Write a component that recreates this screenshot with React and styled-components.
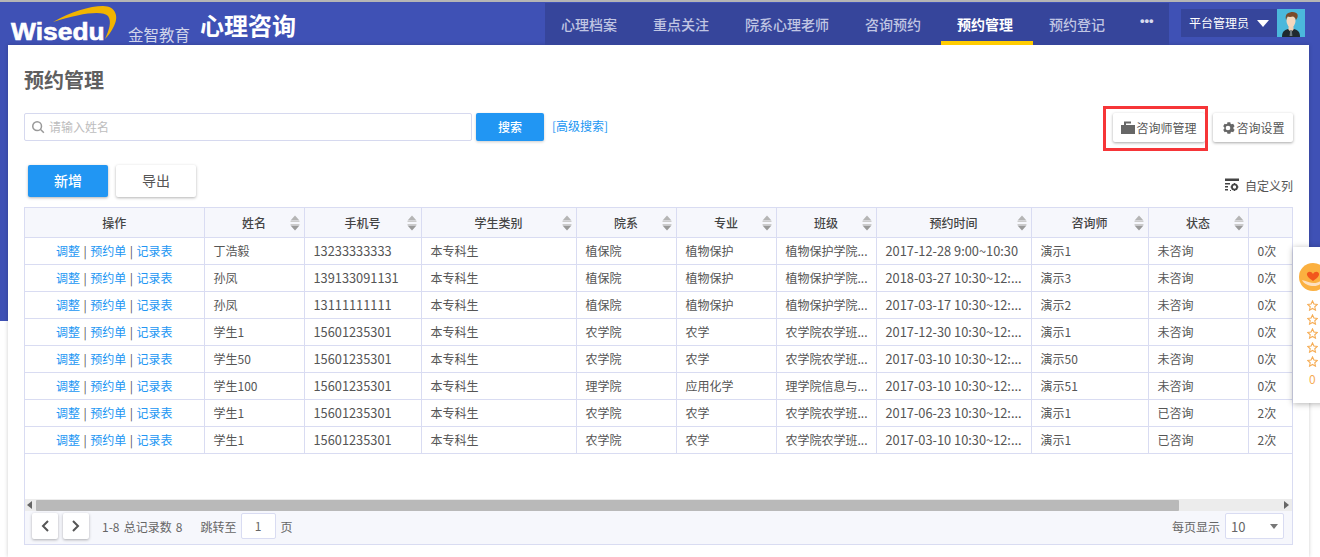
import React from 'react';
import styled, { createGlobalStyle } from 'styled-components';

const Global = createGlobalStyle`
  html, body { margin: 0; padding: 0; height: 557px; overflow: hidden; background: #fff; }
  * { box-sizing: border-box; }
  body { font-family: "Noto Sans CJK SC", "Liberation Sans", sans-serif; color: #555; }
`;

const Page = styled.div`
  position: relative;
  width: 1320px;
  height: 557px;
  overflow: hidden;
  border-top: 2px solid #b5b5b5;
  background: linear-gradient(#3f51b5 319px, #fff 319px);
`;
const Header = styled.header`
  height: 43px;
  display: flex;
  align-items: stretch;
`;
const Brand = styled.div`
  width: 545px;
  display: flex;
  align-items: flex-end;
  padding-left: 11px;
  color: #fff;
`;
const LogoBox = styled.div`
  position: relative;
  width: 117px;
  height: 43px;
  flex: none;
`;
const LogoWord = styled.span`
  position: absolute;
  left: 0;
  bottom: 0;
  font: 700 24px/26px "Liberation Sans", sans-serif;
  -webkit-text-stroke: 0.6px #fff;
  transform: scaleX(1.1);
  transform-origin: left;
`;
const Swoosh = styled.svg`
  position: absolute;
  left: 40px;
  top: 1px;
`;
const LogoCn = styled.span`
  font-size: 15.5px;
  line-height: 20px;
  margin-bottom: 1px;
  color: #d0d4ea;
  width: 73px;
  flex: none;
`;
const AppTitle = styled.span`
  font-size: 24px;
  font-weight: 700;
  line-height: 34px;
  align-self: flex-start;
  margin: 6px 0 0 -1px;
`;
const Nav = styled.nav`
  width: 624px;
  margin-top: 1px;
  display: flex;
  background: #36459b;
`;
const NavItem = styled.div`
  width: ${p => p.$w}px;
  padding-left: 16px;
  font-size: 14px;
  line-height: 42px;
  font-weight: ${p => (p.$active ? 700 : 500)};
  color: ${p => (p.$active ? '#fff' : '#c0c5e3')};
  border-bottom: 4px solid ${p => (p.$active ? '#ffcc00' : 'transparent')};
`;
const Dots = styled(NavItem)`
  width: 44px;
  padding-left: 15px;
  font: 700 13px/36px "Liberation Sans", sans-serif;
  color: #d8dbee;
`;
const UserArea = styled.div`
  flex: 1;
  display: flex;
  align-items: flex-start;
  padding: 7px 0 0 12px;
`;
const UserName = styled.div`
  width: 96px;
  height: 28px;
  background: #36459b;
  color: #fff;
  font-size: 12px;
  line-height: 28px;
  padding-left: 8px;
  display: flex;
  align-items: center;
  gap: 8px;
`;
const Caret = styled.i`
  width: 0;
  height: 0;
  border-left: 6px solid transparent;
  border-right: 6px solid transparent;
  border-top: 7px solid #fff;
`;
const Panel = styled.main`
  margin: 0 11px 0 8px;
  height: 512px;
  background: #fff;
  padding: 0 16px;
  box-shadow: 0 0 4px rgba(0, 0, 0, 0.2);
`;
const Heading = styled.h1`
  margin: 0;
  padding-top: 20px;
  font-size: 20px;
  line-height: 30px;
  font-weight: 700;
  color: #5f5f5f;
  height: 68px;
`;
const Toolbar = styled.div`
  display: flex;
  align-items: flex-start;
  height: 52px;
`;
const SearchBox = styled.div`
  width: 448px;
  height: 28px;
  border: 1px solid #d6d9ef;
  border-radius: 2px;
  display: flex;
  align-items: center;
  gap: 4px;
  padding: 0 0 1px 6px;
  font-size: 12px;
  color: #bdbdbd;
`;
const SearchBtn = styled.button`
  margin-left: 4px;
  width: 68px;
  height: 28px;
  padding: 0 0 1px;
  border: 0;
  border-radius: 2px;
  background: #2196f3;
  color: #fff;
  font: 500 12px "Noto Sans CJK SC", sans-serif;
  box-shadow: 0 1px 3px rgba(0, 0, 0, 0.2);
`;
const AdvLink = styled.a`
  margin-left: 8px;
  font-size: 12px;
  line-height: 25px;
  color: #2196f3;
`;
const RightTools = styled.div`
  margin-left: auto;
  display: flex;
  gap: 8px;
`;
const Highlight = styled.div`
  position: relative;
  &::after {
    content: '';
    position: absolute;
    left: -10px;
    right: -3px;
    top: -7px;
    bottom: -9px;
    border: 3px solid #f63538;
    pointer-events: none;
  }
`;
const ToolBtn = styled.button`
  height: 29px;
  width: ${p => p.$w}px;
  padding: 0;
  border: 0;
  border-radius: 2px;
  background: #fff;
  color: #555;
  font: 12px "Noto Sans CJK SC", sans-serif;
  display: flex;
  align-items: center;
  justify-content: center;
  gap: 1px;
  box-shadow: 0 1px 3px rgba(0, 0, 0, 0.35);
`;
const ActionRow = styled.div`
  display: flex;
  align-items: flex-start;
  justify-content: space-between;
  height: 42px;
  padding-left: 4px;
`;
const ActionBtns = styled.div`
  display: flex;
  gap: 8px;
`;
const ActionBtn = styled.button`
  width: 80px;
  height: 32px;
  padding: 0 0 2px;
  border: 0;
  border-radius: 2px;
  background: ${p => (p.$primary ? '#2196f3' : '#fff')};
  color: ${p => (p.$primary ? '#fff' : '#555')};
  font: ${p => (p.$primary ? 500 : 400)} 14px "Noto Sans CJK SC", sans-serif;
  box-shadow: 0 1px 3px rgba(0, 0, 0, 0.3);
`;
const ColSetting = styled.div`
  display: flex;
  align-items: center;
  gap: 6px;
  font-size: 12px;
  height: 20px;
  margin: 10px 0 0 0;
  color: #555;
`;
const Grid = styled.section`
  width: 1269px;
  height: 338px;
  border: 1px solid #d9dcf2;
  display: flex;
  flex-direction: column;
`;
const TableWrap = styled.div`
  height: 291px;
  overflow: hidden;
`;
const Table = styled.table`
  border-collapse: collapse;
  table-layout: fixed;
  width: 1299px;
  font-size: 12.5px;
`;
const Th = styled.th`
  position: relative;
  height: 29px;
  padding: 0;
  background: #f6f7fc;
  border-right: 1px solid #d9dcf2;
  border-bottom: 1px solid #d9dcf2;
  font-size: 12px;
  font-weight: 500;
  color: #444;
  text-align: center;
`;
const SortIcon = styled.svg`
  position: absolute;
  right: 4px;
  top: 7px;
`;
const Td = styled.td`
  height: 27px;
  padding: 0 8px 0 9px;
  border-right: 1px solid #d9dcf2;
  border-bottom: 1px solid #d9dcf2;
  font-size: 12px;
  color: #555;
  white-space: nowrap;
  overflow: hidden;
  text-overflow: ellipsis;
`;
const ActionCell = styled(Td)`
  padding: 0 8px;
  text-align: center;
  word-spacing: 0.8px;
`;
const NumText = styled.span`
  font-size: 12.8px;
`;
const RowLink = styled.a`
  color: #2196f3;
`;
const ScrollBar = styled.div`
  height: 12px;
  background: #ececec;
  display: flex;
  align-items: center;
  flex: none;
`;
const ScrollThumb = styled.div`
  margin-left: 4px;
  width: 1143px;
  height: 11px;
  background: #b9b9b9;
  border-radius: 1px;
`;
const ScrollArrow = styled.i`
  width: 0;
  height: 0;
  margin: ${p => (p.$right ? '0 3px 0 auto' : '0 0 0 2px')};
  border-top: 4px solid transparent;
  border-bottom: 4px solid transparent;
  ${p => (p.$right ? 'border-left: 5px solid #666;' : 'border-right: 5px solid #666;')}
`;
const Footer = styled.div`
  flex: 1;
  background: #f6f7fc;
  display: flex;
  align-items: center;
  padding: 0 8px 3px 7px;
  font-size: 12px;
  color: #666;
`;
const PageBtn = styled.button`
  width: 26px;
  height: 26px;
  padding: 0;
  margin-right: 5px;
  border: 0;
  border-radius: 2px;
  background: #fff;
  display: flex;
  align-items: center;
  justify-content: center;
  box-shadow: 0 1px 3px rgba(0, 0, 0, 0.3);
`;
const Range = styled.span`
  margin-left: 8px;
  word-spacing: 1.5px;
`;
const JumpLabel = styled.span`
  margin-left: 18px;
`;
const JumpInput = styled.div`
  width: 35px;
  height: 26px;
  margin: 0 5px 0 4px;
  background: #fff;
  border: 1px solid #d9dcf2;
  border-radius: 2px;
  text-align: center;
  line-height: 24px;
`;
const PageSizeLabel = styled.span`
  margin-left: auto;
`;
const PageSize = styled.div`
  width: 59px;
  height: 26px;
  margin-left: 5px;
  background: #fff;
  border: 1px solid #d9dcf2;
  border-radius: 2px;
  display: flex;
  align-items: center;
  justify-content: space-between;
  padding: 0 5px;
  font-size: 13px;
`;
const PageCaret = styled.i`
  width: 0;
  height: 0;
  border-left: 4.5px solid transparent;
  border-right: 4.5px solid transparent;
  border-top: 5px solid #777;
`;
const Float = styled.aside`
  position: absolute;
  left: 1293px;
  top: 245px;
  width: 40px;
  height: 156px;
  background: #fff;
  box-shadow: 0 1px 6px rgba(0, 0, 0, 0.3);
  padding: 16px 0 0 6px;
  display: flex;
  flex-direction: column;
  align-items: flex-start;
  color: #f6ad55;
`;
const Stars = styled.div`
  margin: 9px 0 0 8px;
  display: flex;
  flex-direction: column;
  gap: 3px;
`;
const Zero = styled.div`
  margin: 3px 0 0 10px;
  font-size: 12px;
  line-height: 18px;
`;

const cols = [179, 100, 117, 155, 100, 100, 100, 155, 117, 100, 76];
const heads = ['操作', '姓名', '手机号', '学生类别', '院系', '专业', '班级', '预约时间', '咨询师', '状态', ''];
const rows = [
  ['丁浩毅', '13233333333', '植保院', '植物保护', '植物保护学院...', '2017-12-28 9:00~10:30', '演示1', '未咨询', '0次'],
  ['孙凤', '139133091131', '植保院', '植物保护', '植物保护学院...', '2018-03-27 10:30~12:...', '演示3', '未咨询', '0次'],
  ['孙凤', '13111111111', '植保院', '植物保护', '植物保护学院...', '2017-03-17 10:30~12:...', '演示2', '未咨询', '0次'],
  ['学生1', '15601235301', '农学院', '农学', '农学院农学班...', '2017-12-30 10:30~12:...', '演示1', '未咨询', '0次'],
  ['学生50', '15601235301', '农学院', '农学', '农学院农学班...', '2017-03-10 10:30~12:...', '演示50', '未咨询', '0次'],
  ['学生100', '15601235301', '理学院', '应用化学', '理学院信息与...', '2017-03-10 10:30~12:...', '演示51', '未咨询', '0次'],
  ['学生1', '15601235301', '农学院', '农学', '农学院农学班...', '2017-06-23 10:30~12:...', '演示1', '已咨询', '2次'],
  ['学生1', '15601235301', '农学院', '农学', '农学院农学班...', '2017-03-10 10:30~12:...', '演示1', '已咨询', '2次'],
];

const Sort = () => (
  <SortIcon width="10" height="16" viewBox="0 0 10 16">
    <path d="M5 0.5 L9.5 5.5 H0.5 Z" fill="#b5b5b5" />
    <path d="M5 15.5 L9.5 10.5 H0.5 Z" fill="#9a9a9a" />
    <path d="M0.5 6.5 H9.5 M0.5 9.5 H9.5" stroke="#ccc" strokeWidth="1" />
  </SortIcon>
);

const Star = () => (
  <svg width="11" height="11" viewBox="0 0 24 24" fill="none" stroke="#f6ad55" strokeWidth="2.4">
    <path d="M12 2l3.100 6.800 7.400.9-5.500 5.100 1.500 7.300L12 18.400l-6.500 3.700L7 14.800 1.500 9.700l7.400-.9z" />
  </svg>
);

const Avatar = () => (
  <svg width="28" height="28" viewBox="0 0 28 28" style={{ flex: 'none' }}>
    <rect width="28" height="28" fill="#4bb8dc" />
    <path d="M5 28c0-5 2-7 6-8h6c4 1 6 3 6 8z" fill="#1f2a30" />
    <path d="M11.500 17h5v3.500l-2.500 3-2.500-3z" fill="#f3d2b5" />
    <path d="M13.200 21h1.600l.6 6h-2.800z" fill="#6d7a80" />
    <ellipse cx="14" cy="12" rx="4.500" ry="6" fill="#f5d7bd" />
    <path d="M9 11C8 6 10 4 13 3.500c3-1 7 0 7.500 2 .5 2 0 3.500-1.500 5.500-.5-2-1.500-3-3-3.500-2 .5-4 .5-5.500 0-.5 1-1 2-1.500 3.500z" fill="#7a4a2a" />
  </svg>
);

export default function App() {
  return (
    <>
      <Global />
      <Page>
        <Header>
          <Brand>
            <LogoBox>
              <Swoosh width="78" height="40" viewBox="51 3 78 40">
                <path d="M53 22C70 12 90 6 103 6c13 0 16 11 11 20-3 6-6 10-9 13 4-9 7-17 3-23-5-6-28-3-55 6z" fill="#f2b400" />
              </Swoosh>
              <LogoWord>Wisedu</LogoWord>
            </LogoBox>
            <LogoCn>金智教育</LogoCn>
            <AppTitle>心理咨询</AppTitle>
          </Brand>
          <Nav>
            <NavItem $w={92}>心理档案</NavItem>
            <NavItem $w={92}>重点关注</NavItem>
            <NavItem $w={120}>院系心理老师</NavItem>
            <NavItem $w={92}>咨询预约</NavItem>
            <NavItem $w={92} $active>预约管理</NavItem>
            <NavItem $w={92}>预约登记</NavItem>
            <Dots>•••</Dots>
          </Nav>
          <UserArea>
            <UserName>平台管理员<Caret /></UserName>
            <Avatar />
          </UserArea>
        </Header>
        <Panel>
          <Heading>预约管理</Heading>
          <Toolbar>
            <SearchBox>
              <svg width="14" height="14" viewBox="0 0 24 24" fill="none" stroke="#999" strokeWidth="2.6">
                <circle cx="10.500" cy="10.500" r="7.500" />
                <path d="M16 16l6 6" />
              </svg>
              请输入姓名
            </SearchBox>
            <SearchBtn>搜索</SearchBtn>
            <AdvLink>[高级搜索]</AdvLink>
            <RightTools>
              <Highlight>
                <ToolBtn $w={92}>
                  <svg width="14" height="14" viewBox="0 0 14 14" fill="#666">
                    <path d="M0 4h3V0.500h7V2.500H5V4h9v9H0z" />
                  </svg>
                  咨询师管理
                </ToolBtn>
              </Highlight>
              <ToolBtn $w={80}>
                <svg width="14" height="14" viewBox="0 0 24 24" fill="#666">
                  <path d="M12 8a4 4 0 100 8 4 4 0 000-8zm9.400 5.500l2 1.600-2.500 4.300-2.400-1a8 8 0 01-2 1.100L16 22h-5l-.4-2.500a8 8 0 01-2-1.100l-2.400 1-2.500-4.300 2-1.600a8 8 0 010-2.900l-2-1.600 2.500-4.300 2.400 1a8 8 0 012-1.100L11 2h5l.4 2.500a8 8 0 012 1.100l2.400-1 2.500 4.300-2 1.600a8 8 0 010 2.900z" />
                </svg>
                咨询设置
              </ToolBtn>
            </RightTools>
          </Toolbar>
          <ActionRow>
            <ActionBtns>
              <ActionBtn $primary>新增</ActionBtn>
              <ActionBtn>导出</ActionBtn>
            </ActionBtns>
            <ColSetting>
              <svg width="14" height="14" viewBox="0 0 14 14" fill="#444">
                <path d="M0 0.500h14v2.500H0zM0 5h5v1.500H0zM0 8h3v1.500H0zM0 11h3v1.500H0zM5 12h1v1H5z" />
                <circle cx="9.500" cy="9" r="2.600" fill="none" stroke="#444" strokeWidth="1.800" />
                <path d="M9.500 5v1M9.500 12v1M5.500 9h1M12.500 9h1" stroke="#444" strokeWidth="1.200" />
              </svg>
              自定义列
            </ColSetting>
          </ActionRow>
          <Grid>
            <TableWrap>
              <Table>
                <colgroup>
                  {cols.map((w, i) => <col key={i} width={w} />)}
                </colgroup>
                <thead>
                  <tr>
                    {heads.map((h, i) => (
                      <Th key={i}>{h}{i > 0 && i < 10 && <Sort />}</Th>
                    ))}
                  </tr>
                </thead>
                <tbody>
                  {rows.map((r, i) => (
                    <tr key={i}>
                      <ActionCell><RowLink>调整</RowLink> | <RowLink>预约单</RowLink> | <RowLink>记录表</RowLink></ActionCell>
                      <Td>{r[0]}</Td>
                      <Td><NumText>{r[1]}</NumText></Td>
                      <Td>本专科生</Td>
                      <Td>{r[2]}</Td>
                      <Td>{r[3]}</Td>
                      <Td>{r[4]}</Td>
                      <Td><NumText>{r[5]}</NumText></Td>
                      <Td>{r[6]}</Td>
                      <Td>{r[7]}</Td>
                      <Td>{r[8]}</Td>
                    </tr>
                  ))}
                </tbody>
              </Table>
            </TableWrap>
            <ScrollBar>
              <ScrollArrow />
              <ScrollThumb />
              <ScrollArrow $right />
            </ScrollBar>
            <Footer>
              <PageBtn>
                <svg width="12" height="14" viewBox="0 0 12 14" fill="none" stroke="#555" strokeWidth="2"><path d="M9 2L4 7l5 5" /></svg>
              </PageBtn>
              <PageBtn>
                <svg width="12" height="14" viewBox="0 0 12 14" fill="none" stroke="#555" strokeWidth="2"><path d="M3 2l5 5-5 5" /></svg>
              </PageBtn>
              <Range>1-8 总记录数 8</Range>
              <JumpLabel>跳转至</JumpLabel>
              <JumpInput>1</JumpInput>
              <span>页</span>
              <PageSizeLabel>每页显示</PageSizeLabel>
              <PageSize>10<PageCaret /></PageSize>
            </Footer>
          </Grid>
        </Panel>
        <Float>
          <svg width="28" height="28" viewBox="0 0 28 28">
            <circle cx="14" cy="14" r="14" fill="#fbb040" />
            <path d="M14 11c-2-4-7-2-6 1 1 3 4 4 6 6 2-2 5-3 6-6 1-3-4-5-6-1z" fill="#f2561d" />
            <path d="M3 17c5 1 8 3 12 3s7-2 9-5c0 5-4 8-9 8-5 0-10-2-12-6z" fill="#fde0c0" />
          </svg>
          <Stars>
            <Star /><Star /><Star /><Star /><Star />
          </Stars>
          <Zero>0</Zero>
        </Float>
      </Page>
    </>
  );
}
